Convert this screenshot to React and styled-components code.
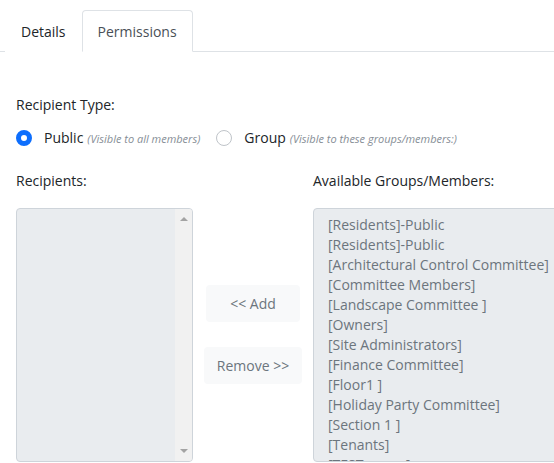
import React from 'react'
import styled, { createGlobalStyle } from 'styled-components'

const Global = createGlobalStyle`
  html, body {
    margin: 0;
    padding: 0;
    background: #fff;
    overflow: hidden;
  }
  body {
    font-family: "Open Sans", "Liberation Sans", sans-serif;
    font-size: 14px;
    color: #212529;
  }
`

const Page = styled.div`
  width: 554px;
  height: 463px;
  overflow: hidden;
`

const Tabs = styled.div`
  display: flex;
  align-items: flex-end;
  height: 52px;
  border-bottom: 1px solid #dee2e6;
  padding-left: 5px;
  box-sizing: border-box;
`

const Tab = styled.div`
  box-sizing: border-box;
  padding: 0 15px;
  display: flex;
  align-items: center;
  margin-bottom: -1px;
  border: 1px solid ${p => (p.$active ? '#dee2e6' : 'transparent')};
  border-bottom-color: ${p => (p.$active ? '#fff' : 'transparent')};
  border-radius: 4px 4px 0 0;
  background: #fff;
  color: ${p => (p.$active ? '#495057' : '#212529')};
  height: ${p => (p.$active ? '42px' : '41px')};
`

const Body = styled.div`
  padding: 42px 16px 0 16px;
`

const Label = styled.div`
  line-height: 21px;
`

const RadioRow = styled.div`
  display: flex;
  align-items: center;
  margin-top: 12px;
  height: 21px;
`

const Option = styled.label`
  display: flex;
  align-items: center;
  margin-right: 16px;
`

const Radio = styled.span`
  width: 16px;
  height: 16px;
  box-sizing: border-box;
  border-radius: 50%;
  border: ${p => (p.$checked ? '5px solid #0d6efd' : '1px solid #bfc4c9')};
  background: #fff;
  margin-right: 12px;
`

const Hint = styled.span`
  font-size: 11px;
  font-style: italic;
  color: #868e96;
  margin-left: 4px;
  position: relative;
  top: 1px;
`

const Columns = styled.div`
  display: flex;
  margin-top: 22px;
`

const Column = styled.div`
  display: flex;
  flex-direction: column;
  width: ${p => p.$w};
  flex-shrink: 0;
`

const ListBox = styled.div`
  margin-top: 17px;
  height: 254px;
  box-sizing: border-box;
  border: 1px solid #ced4da;
  border-radius: 4px;
  background: #e9ecef;
  display: flex;
  overflow: hidden;
  width: ${p => p.$w};
`

const Items = styled.div`
  flex: 1;
  padding: 6px 14px;
  color: #6c757d;
  font-size: 14px;
  line-height: 20px;
  white-space: nowrap;
`

const Scrollbar = styled.div`
  width: 17px;
  background: #f1f1f1;
  display: flex;
  flex-direction: column;
  justify-content: space-between;
  align-items: center;
  padding: 8px 0;
`

const Arrow = styled.span`
  width: 0;
  height: 0;
  border-left: 4px solid transparent;
  border-right: 4px solid transparent;
  ${p => (p.$down ? 'border-top: 4px solid #a3a3a3;' : 'border-bottom: 4px solid #a3a3a3;')}
`

const Middle = styled.div`
  width: 120px;
  flex-shrink: 0;
  display: flex;
  flex-direction: column;
  align-items: center;
  padding-top: 115px;
  gap: 25px;
`

const Button = styled.button`
  font-family: inherit;
  font-size: 14px;
  color: #6c757d;
  background: #f8f9fa;
  border: none;
  border-radius: 4px;
  height: 37px;
  padding: 0 ${p => p.$pad || '12px'};
  cursor: pointer;
`

const groups = [
  '[Residents]-Public',
  '[Residents]-Public',
  '[Architectural Control Committee]',
  '[Committee Members]',
  '[Landscape Committee ]',
  '[Owners]',
  '[Site Administrators]',
  '[Finance Committee]',
  '[Floor1 ]',
  '[Holiday Party Committee]',
  '[Section 1 ]',
  '[Tenants]',
  '[TEST group]',
]

export default function App() {
  return (
    <Page>
      <Global />
      <Tabs>
        <Tab>Details</Tab>
        <Tab $active>Permissions</Tab>
      </Tabs>
      <Body>
        <Label>Recipient Type:</Label>
        <RadioRow>
          <Option>
            <Radio $checked />
            Public <Hint>(Visible to all members)</Hint>
          </Option>
          <Option>
            <Radio />
            Group <Hint>(Visible to these groups/members:)</Hint>
          </Option>
        </RadioRow>
        <Columns>
          <Column $w="177px">
            <Label>Recipients:</Label>
            <ListBox $w="177px">
              <Items />
              <Scrollbar>
                <Arrow />
                <Arrow $down />
              </Scrollbar>
            </ListBox>
          </Column>
          <Middle>
            <Button $pad="24px">&lt;&lt; Add</Button>
            <Button $pad="13px">Remove &gt;&gt;</Button>
          </Middle>
          <Column $w="300px">
            <Label>Available Groups/Members:</Label>
            <ListBox $w="300px">
              <Items>
                {groups.map((g, i) => (
                  <div key={i}>{g}</div>
                ))}
              </Items>
            </ListBox>
          </Column>
        </Columns>
      </Body>
    </Page>
  )
}
